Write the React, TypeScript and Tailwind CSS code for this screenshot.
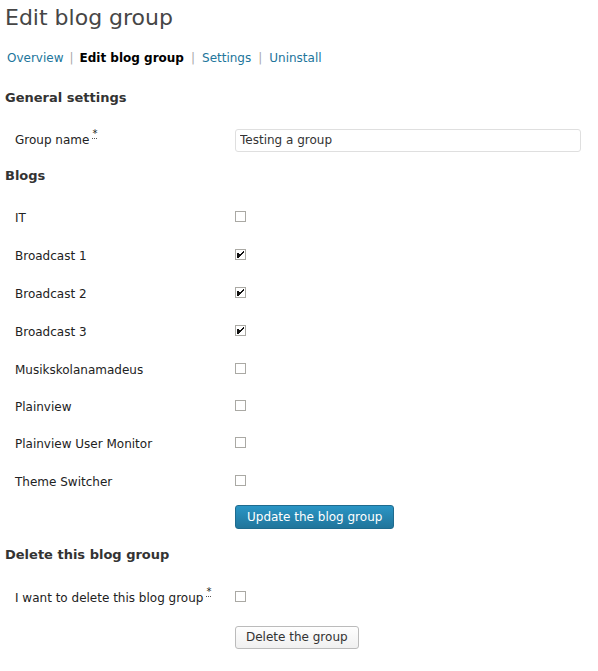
import React from 'react'

const blogs = [
  { name: 'IT', checked: false },
  { name: 'Broadcast 1', checked: true },
  { name: 'Broadcast 2', checked: true },
  { name: 'Broadcast 3', checked: true },
  { name: 'Musikskolanamadeus', checked: false },
  { name: 'Plainview', checked: false, short: true },
  { name: 'Plainview User Monitor', checked: false },
  { name: 'Theme Switcher', checked: false },
]

function Box({ checked }: { checked?: boolean }) {
  return (
    <span className='inline-flex w-[11px] h-[11px] mb-[4px] border border-[#aaa9a4] bg-white items-center justify-center'>
      {checked && (
        <svg width='7' height='7' viewBox='0 0 7 7' shapeRendering='crispEdges'>
          <path d='M6 0h1v1H6zM5 1h2v1H5zM0 2h2v1H0zM4 2h2v1H4zM0 3h5v1H0zM0 4h4v1H0zM0 5h3v1H0zM0 6h2v1H0z' fill='#111' />
        </svg>
      )}
    </span>
  )
}

function Req() {
  return (
    <span className='ml-[3px] inline-block relative -top-[7px] text-[10px] leading-[8px] border-b border-dotted border-[#555] cursor-help'>*</span>
  )
}

function Row({ label, children, short }: { label: React.ReactNode; children: React.ReactNode; short?: boolean }) {
  return (
    <div className={`grid grid-cols-[220px_1fr] items-center pl-[10px] ${short ? 'h-[36px]' : 'h-[38px]'}`}>
      <div className='text-[12px] text-[#222]'>{label}</div>
      <div className='flex'>{children}</div>
    </div>
  )
}

export default function App() {
  return (
    <main className='bg-white w-[598px] h-[671px] pl-[5px] pr-[17px] text-[#333]' style={{ fontFamily: '"DejaVu Sans", sans-serif' }}>
      <h1 className='text-[22px] font-normal text-[#464646] pt-[4px] leading-[28px]'>Edit blog group</h1>

      <nav className='mt-[18px] text-[12px] text-[#aaa] pl-[2px] flex items-center gap-[6px] leading-[16px]'>
        <a className='text-[#21759b]'>Overview</a>
        <span>|</span>
        <span className='text-black font-bold'>Edit blog group</span>
        <span className='px-[1px]'>|</span>
        <a className='text-[#21759b]'>Settings</a>
        <span className='px-[1px]'>|</span>
        <a className='text-[#21759b]'>Uninstall</a>
      </nav>

      <h3 className='mt-[23px] text-[13px] font-bold leading-[18px]'>General settings</h3>
      <div className='mt-[14px]'>
        <Row label={<>Group name<Req /></>}>
          <input
            defaultValue='Testing a group'
            className='w-full h-[23px] border border-[#dfdfdf] rounded-[3px] px-[4px] text-[12px] text-[#333] outline-none'
          />
        </Row>
      </div>

      <h3 className='mt-[8px] text-[13px] font-bold leading-[18px]'>Blogs</h3>
      <div className='mt-[14px]'>
        {blogs.map((b) => (
          <Row key={b.name} label={b.name} short={b.short}>
            <Box checked={b.checked} />
          </Row>
        ))}
        <div className='pl-[230px] pt-[3px]'>
          <button className='h-[24px] px-[11px] rounded-[3px] border border-[#1f6b8e] bg-gradient-to-b from-[#2a95c5] to-[#21759b] text-white text-[12px]'>
            Update the blog group
          </button>
        </div>
      </div>

      <h3 className='mt-[17px] text-[13px] font-bold leading-[18px]'>Delete this blog group</h3>
      <div className='mt-[15px]'>
        <Row label={<>I want to delete this blog group<Req /></>}>
          <Box />
        </Row>
        <div className='pl-[230px] pt-[7px]'>
          <button className='h-[23px] px-[10px] rounded-[3px] border border-[#bbb] bg-gradient-to-b from-[#fefefe] to-[#f0f0f0] text-[#333] text-[12px]'>
            Delete the group
          </button>
        </div>
      </div>
    </main>
  )
}
